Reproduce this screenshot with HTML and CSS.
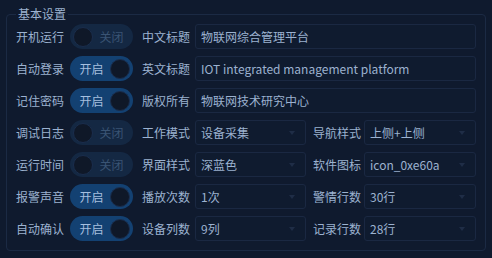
FILE: index.html
```html
<!DOCTYPE html>
<html lang="zh-CN">
<head>
<meta charset="utf-8">
<title>基本设置</title>
<link rel="stylesheet" href="styles.css">
</head>
<body>
<div class="group">
  <div class="legend">基本设置</div>
  <div class="grid">
    <span class="lbl">开机运行</span>
    <div class="sw off"><span class="knob"></span><span class="st">关闭</span></div>
    <span class="lbl l2">中文标题</span>
    <div class="field wide">物联网综合管理平台</div>

    <span class="lbl">自动登录</span>
    <div class="sw on"><span class="st">开启</span><span class="knob"></span></div>
    <span class="lbl l2">英文标题</span>
    <div class="field wide">IOT integrated management platform</div>

    <span class="lbl">记住密码</span>
    <div class="sw on"><span class="st">开启</span><span class="knob"></span></div>
    <span class="lbl l2">版权所有</span>
    <div class="field wide">物联网技术研究中心</div>

    <span class="lbl">调试日志</span>
    <div class="sw off"><span class="knob"></span><span class="st">关闭</span></div>
    <span class="lbl l2">工作模式</span>
    <div class="field combo">设备采集</div>
    <span class="lbl l3">导航样式</span>
    <div class="field combo">上侧+上侧</div>

    <span class="lbl">运行时间</span>
    <div class="sw off"><span class="knob"></span><span class="st">关闭</span></div>
    <span class="lbl l2">界面样式</span>
    <div class="field combo">深蓝色</div>
    <span class="lbl l3">软件图标</span>
    <div class="field combo">icon_0xe60a</div>

    <span class="lbl">报警声音</span>
    <div class="sw on"><span class="st">开启</span><span class="knob"></span></div>
    <span class="lbl l2">播放次数</span>
    <div class="field combo">1次</div>
    <span class="lbl l3">警情行数</span>
    <div class="field combo">30行</div>

    <span class="lbl">自动确认</span>
    <div class="sw on"><span class="st">开启</span><span class="knob"></span></div>
    <span class="lbl l2">设备列数</span>
    <div class="field combo">9列</div>
    <span class="lbl l3">记录行数</span>
    <div class="field combo">28行</div>
  </div>
</div>
</body>
</html>
```

FILE: styles.css
```css
html, body {
  margin: 0;
  padding: 0;
  background: #0f1a2e;
  width: 492px;
  height: 258px;
  overflow: hidden;
  font-family: "Noto Sans CJK SC", "Noto Sans", sans-serif;
  font-size: 12px;
  color: #9cb2d0;
}

.group {
  position: relative;
  margin: 14px 0 0 6px;
  width: 480px;
  height: 237px;
  box-sizing: border-box;
  border: 1px solid #1b2a44;
  border-radius: 4px;
  padding: 9px 9px 0 9px;
}

.legend {
  position: absolute;
  left: 9px;
  top: -9px;
  padding: 0 2px;
  line-height: 16px;
  background: #0f1a2e;
  color: #9cb2d0;
}

.grid {
  display: grid;
  grid-template-columns: 54px 63px 62px 111px 58px 112px;
  grid-auto-rows: 25px;
  row-gap: 7px;
  align-items: center;
}

.lbl {
  line-height: 25px;
  white-space: nowrap;
}
.l2 { padding-left: 9px; }
.l3 { padding-left: 7px; }

.field {
  height: 25px;
  box-sizing: border-box;
  border: 1px solid #1a2842;
  border-radius: 3px;
  background: #0f1b2f;
  padding: 0 5px;
  line-height: 23px;
  white-space: nowrap;
  overflow: hidden;
  position: relative;
}
.wide { grid-column: 4 / 7; }

.combo::after {
  content: "";
  position: absolute;
  right: 10px;
  top: 10px;
  border-left: 3.5px solid transparent;
  border-right: 3.5px solid transparent;
  border-top: 4px solid #1f2d46;
}

.sw {
  height: 25px;
  box-sizing: border-box;
  border-radius: 13px;
  display: flex;
  align-items: center;
  padding: 0 3px;
}
.sw .knob {
  width: 20px;
  height: 20px;
  box-sizing: border-box;
  border-radius: 50%;
  background: #0f1828;
  border: 1.5px solid #1a2d4c;
  flex: none;
}
.sw .st {
  flex: 1;
  text-align: center;
  line-height: 25px;
}
.sw.off {
  background: #142843;
}
.sw.off .st {
  color: #3a5474;
}
.sw.on {
  background: #134172;
}
.sw.on .st {
  color: #a5bfdf;
}
```
